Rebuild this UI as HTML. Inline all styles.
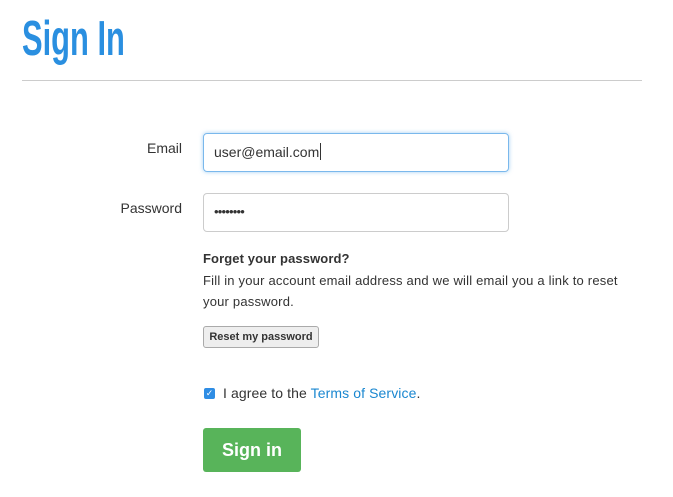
<!DOCTYPE html>
<html><head><style>
body{margin:0;background:#fff;font-family:"Liberation Sans",sans-serif;color:#333;width:673px;height:497px;overflow:hidden;position:relative}
.a{position:absolute}
h1{position:absolute;left:22px;top:10px;margin:0;font-size:49px;font-weight:bold;color:#2a8fe0;transform:scaleX(0.63);transform-origin:left top;line-height:58px}
.hr{left:22px;top:80px;width:620px;height:1px;background:#ccc}
.lbl{font-size:14px;color:#333;width:160px;text-align:right;left:22px}
.inp{left:203px;width:306px;height:37px;border:1px solid #ccc;border-radius:4px;box-sizing:border-box;font-size:14px;padding-left:10px;line-height:36px;color:#333}
.t{font-size:13px;left:203px;color:#333;letter-spacing:0.2px}
</style></head><body>
<h1>Sign In</h1>
<div class="a hr"></div>
<div class="a lbl" style="top:140px">Email</div>
<div class="a inp" style="top:133px;height:39px;border-color:#7ab8ec;box-shadow:0 0 4px rgba(102,175,233,.6)">user@email.com<span style="display:inline-block;width:1px;height:17px;background:#333;vertical-align:-3px;margin-left:1px"></span></div>
<div class="a lbl" style="top:200px">Password</div>
<div class="a inp" style="top:193px;height:39px;font-size:13px;letter-spacing:-0.8px">••••••••</div>
<div class="a t" style="top:251px;font-weight:bold;letter-spacing:0.1px">Forget your password?</div>
<div class="a t" style="top:273px">Fill in your account email address and we will email you a link to reset</div>
<div class="a t" style="top:294px">your password.</div>
<div class="a" style="left:203px;top:326px;width:116px;height:22px;border:1px solid #aaa;border-radius:3px;background:#eee;box-sizing:border-box;font-size:11px;font-weight:bold;text-align:center;line-height:21px;color:#333">Reset my password</div>
<div class="a" style="left:204px;top:388px;width:11px;height:11px;border-radius:2px;background:#2f8de4;color:#fff;font-size:9px;line-height:11px;text-align:center">✓</div>
<div class="a" style="left:223px;top:385px;font-size:14px;color:#333;letter-spacing:0.1px">I agree to the <span style="color:#1a87d0">Terms of Service</span>.</div>
<div class="a" style="left:203px;top:428px;width:98px;height:44px;background:#58b45a;border-radius:3px;color:#fff;font-weight:bold;font-size:18px;text-align:center;line-height:44px">Sign in</div>
</body></html>
